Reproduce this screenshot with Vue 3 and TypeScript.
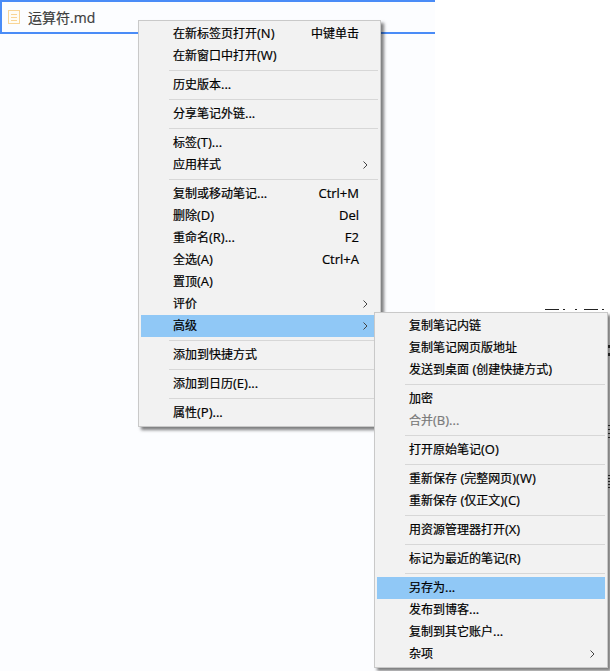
<script setup lang="ts">
type Row = { label?: string; hint?: string; sub?: boolean; active?: boolean; off?: boolean; sep?: boolean }
const sep: Row = { sep: true }
const mainMenu: Row[] = [
  { label: '在新标签页打开(N)', hint: '中键单击' },
  { label: '在新窗口中打开(W)' },
  sep,
  { label: '历史版本...' },
  sep,
  { label: '分享笔记外链...' },
  sep,
  { label: '标签(T)...' },
  { label: '应用样式', sub: true },
  sep,
  { label: '复制或移动笔记...', hint: 'Ctrl+M' },
  { label: '删除(D)', hint: 'Del' },
  { label: '重命名(R)...', hint: 'F2' },
  { label: '全选(A)', hint: 'Ctrl+A' },
  { label: '置顶(A)' },
  { label: '评价', sub: true },
  { label: '高级', sub: true, active: true },
  sep,
  { label: '添加到快捷方式' },
  sep,
  { label: '添加到日历(E)...' },
  sep,
  { label: '属性(P)...' }
]
const subMenu: Row[] = [
  { label: '复制笔记内链' },
  { label: '复制笔记网页版地址' },
  { label: '发送到桌面 (创建快捷方式)' },
  sep,
  { label: '加密' },
  { label: '合并(B)...', off: true },
  sep,
  { label: '打开原始笔记(O)' },
  sep,
  { label: '重新保存 (完整网页)(W)' },
  { label: '重新保存 (仅正文)(C)' },
  sep,
  { label: '用资源管理器打开(X)' },
  sep,
  { label: '标记为最近的笔记(R)' },
  sep,
  { label: '另存为...', active: true },
  { label: '发布到博客...' },
  { label: '复制到其它账户...' },
  { label: '杂项', sub: true }
]
const menus = [
  { id: 'main', rows: mainMenu },
  { id: 'sub', rows: subMenu }
]

// Split a label into runs so that Latin characters can be set slightly larger than the CJK ones.
function runs(text = ''): { text: string; latin: boolean }[] {
  return text
    .split(/([\x00-\x7f]+)/)
    .filter(Boolean)
    .map((part) => ({ text: part, latin: /^[\x00-\x7f]/.test(part) }))
}

// Bits of the page's own text that show around the menus.
const peeks = [
  { x: 545, y: 309, w: 14, h: 1 },
  { x: 563, y: 309, w: 2, h: 1 },
  { x: 575, y: 309, w: 2, h: 1 },
  { x: 584, y: 309, w: 14, h: 1 },
  { x: 602, y: 309, w: 2, h: 1 },
  { x: 608, y: 345, w: 2, h: 3 },
  { x: 608, y: 353, w: 2, h: 3 },
  { x: 608, y: 425, w: 2, h: 1 },
  { x: 608, y: 429, w: 2, h: 1 },
  { x: 608, y: 433, w: 2, h: 1 },
  { x: 608, y: 437, w: 2, h: 1 },
  { x: 608, y: 475, w: 2, h: 1 },
  { x: 608, y: 478, w: 2, h: 1 },
  { x: 608, y: 481, w: 2, h: 1 },
  { x: 608, y: 484, w: 2, h: 1 },
  { x: 608, y: 487, w: 2, h: 1 }
]
</script>

<template>
  <div class="page">
    <div class="tab">
      <svg class="note" width="12" height="14" viewBox="0 0 12 14" fill="none">
        <rect x="0.5" y="0.5" width="11" height="13" fill="#fffdf6" stroke="#f9d596" />
        <path d="M3 4.5h6M3 7.5h6M3 10.5h6" stroke="#f9d596" />
      </svg>
      <span class="title">运算符.md</span>
    </div>
    <div v-for="menu in menus" :key="menu.id" class="menu" :class="menu.id">
      <template v-for="(row, i) in menu.rows" :key="i">
        <div v-if="row.sep" class="sep"></div>
        <div v-else class="row" :class="{ active: row.active, off: row.off }">
          <span class="label"><span v-for="(r, j) in runs(row.label)" :key="j" :class="{ latin: r.latin }">{{ r.text }}</span></span>
          <span v-if="row.hint" class="hint"><span v-for="(r, j) in runs(row.hint)" :key="j" :class="{ latin: r.latin }">{{ r.text }}</span></span>
          <svg v-if="row.sub" class="arrow" width="5" height="8" viewBox="0 0 5 8" fill="none">
            <path d="M0.5 0.5L4 4L0.5 7.5" stroke="#444" />
          </svg>
        </div>
      </template>
    </div>
    <i
      v-for="(p, i) in peeks"
      :key="'p' + i"
      class="peek"
      :style="{ left: p.x + 'px', top: p.y + 'px', width: p.w + 'px', height: p.h + 'px' }"
    ></i>
  </div>
</template>

<style>
html, body { margin: 0; background: #fff; }
</style>

<style scoped>
.page {
  position: relative;
  width: 610px;
  height: 671px;
  overflow: hidden;
  background: linear-gradient(to right, #fcfdff 435px, #fff 435px);
  font-family: "Open Sans", "Noto Sans CJK SC", sans-serif;
}
.tab {
  box-sizing: border-box;
  width: 435px;
  height: 34px;
  display: flex;
  align-items: center;
  gap: 8px;
  padding: 0 0 0 6px;
  border: solid #4a8cf7;
  border-width: 2px 0 2px 2px;
}
.title {
  font-size: 14px;
  color: #3d3d3d;
  -webkit-text-stroke: 0.2px #3d3d3d;
}
.menu {
  position: absolute;
  box-sizing: border-box;
  display: flex;
  flex-direction: column;
  padding: 2px;
  background: #f2f2f2;
  border: 1px solid #c9c9c9;
  box-shadow: 3px 3px 3px rgba(0, 0, 0, 0.5);
}
.main { left: 138px; top: 20px; width: 243px; height: 407px; }
.sub { left: 374px; top: 312px; width: 234px; height: 356px; }
.row {
  position: relative;
  display: flex;
  align-items: center;
  justify-content: space-between;
  height: 22px;
  padding: 0 19px 2px 32px;
  box-sizing: border-box;
  font-size: 12px;
  color: #000;
  -webkit-text-stroke: 0.2px currentColor;
  white-space: nowrap;
}
.latin { font-size: 13px; }
.active { background: #90c8f6; }
.off { color: #7a7a7a; }
.sep {
  height: 1px;
  margin: 3px 0 3px 28px;
  background: #d7d7d7;
}
.arrow {
  position: absolute;
  right: 10px;
  top: 7px;
}
.peek {
  position: absolute;
  background: #222;
}
</style>
